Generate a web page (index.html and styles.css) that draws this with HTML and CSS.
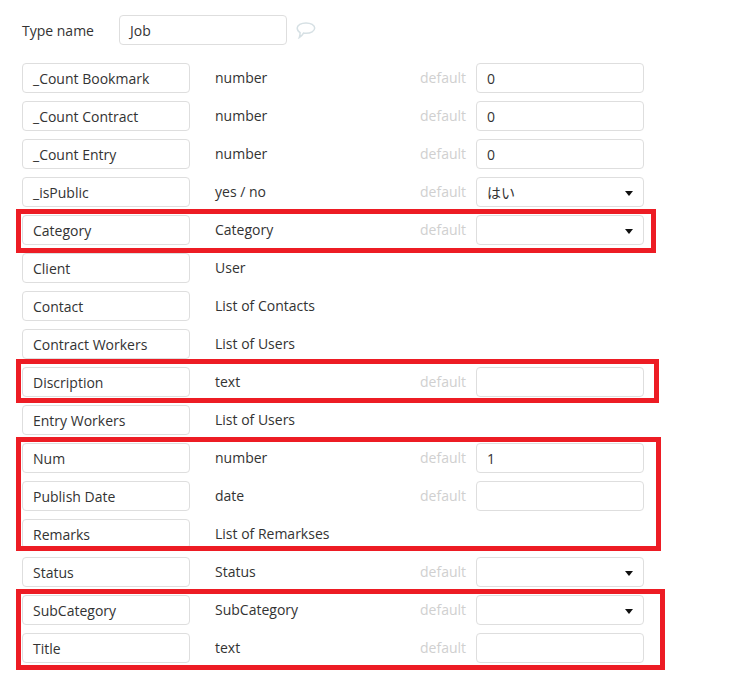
FILE: index.html
```html
<!DOCTYPE html>
<html lang="en">
<head>
    <meta charset="UTF-8">
    <meta name="viewport" content="width=device-width, initial-scale=1.0">
    <title>Type editor</title>
    <link rel="stylesheet" href="styles.css">
</head>
<body>
    <div class="editor">
        <!-- type name -->
        <div class="type-row">
            <span class="type-label">Type name</span>
            <div class="box type-input">Job</div>
            <svg class="comment-icon" width="20" height="17" viewBox="0 0 20 17">
                <path d="M10 .9c4.800 0 8.700 2.300 8.700 5.200S14.800 11.300 10 11.300c-.9 0-1.700-.1-2.500-.2-.9 1.700-2.100 3.300-4.200 4.400 .6-1.300.8-2.800.8-4.900C2.300 9.600 1.200 8 1.200 6.100 1.200 3.200 5.200.9 10 .9z" fill="none" stroke="#d6e0e4" stroke-width="1.500"/>
            </svg>
        </div>

        <!-- fields -->
        <div class="fields">
            <div class="field">
                <div class="box name">_Count Bookmark</div>
                <span class="kind">number</span>
                <span class="default-label">default</span>
                <div class="box value">0</div>
            </div>
            <div class="field">
                <div class="box name">_Count Contract</div>
                <span class="kind">number</span>
                <span class="default-label">default</span>
                <div class="box value">0</div>
            </div>
            <div class="field">
                <div class="box name">_Count Entry</div>
                <span class="kind">number</span>
                <span class="default-label">default</span>
                <div class="box value">0</div>
            </div>
            <div class="field">
                <div class="box name">_isPublic</div>
                <span class="kind">yes / no</span>
                <span class="default-label">default</span>
                <div class="box value select">はい</div>
            </div>
            <div class="field">
                <div class="box name">Category</div>
                <span class="kind">Category</span>
                <span class="default-label">default</span>
                <div class="box value select"></div>
            </div>
            <div class="field">
                <div class="box name">Client</div>
                <span class="kind">User</span>
            </div>
            <div class="field">
                <div class="box name">Contact</div>
                <span class="kind">List of Contacts</span>
            </div>
            <div class="field">
                <div class="box name">Contract Workers</div>
                <span class="kind">List of Users</span>
            </div>
            <div class="field">
                <div class="box name">Discription</div>
                <span class="kind">text</span>
                <span class="default-label">default</span>
                <div class="box value"></div>
            </div>
            <div class="field">
                <div class="box name">Entry Workers</div>
                <span class="kind">List of Users</span>
            </div>
            <div class="field">
                <div class="box name">Num</div>
                <span class="kind">number</span>
                <span class="default-label">default</span>
                <div class="box value">1</div>
            </div>
            <div class="field">
                <div class="box name">Publish Date</div>
                <span class="kind">date</span>
                <span class="default-label">default</span>
                <div class="box value"></div>
            </div>
            <div class="field">
                <div class="box name">Remarks</div>
                <span class="kind">List of Remarkses</span>
            </div>
            <div class="field">
                <div class="box name">Status</div>
                <span class="kind">Status</span>
                <span class="default-label">default</span>
                <div class="box value select"></div>
            </div>
            <div class="field">
                <div class="box name">SubCategory</div>
                <span class="kind">SubCategory</span>
                <span class="default-label">default</span>
                <div class="box value select"></div>
            </div>
            <div class="field">
                <div class="box name">Title</div>
                <span class="kind">text</span>
                <span class="default-label">default</span>
                <div class="box value"></div>
            </div>
        </div>

        <!-- red marks drawn over the screenshot -->
        <div class="mark mark-category"></div>
        <div class="mark mark-discription"></div>
        <div class="mark mark-num"></div>
        <div class="mark mark-sub"></div>
    </div>
</body>
</html>
```

FILE: styles.css
```css
/* base */
body {
    margin: 0;
    background-color: white;
    color: #333;
    font-family: "Open Sans", Arial, "Noto Sans CJK JP", sans-serif;
    font-size: 14px;
}

.editor {
    position: relative;
    height: 673px;
    padding: 15px 0 0 22px;
    box-sizing: border-box;
    overflow: hidden;
}

.box {
    width: 168px;
    height: 30px;
    padding: 0 10px;
    box-sizing: border-box;
    display: flex;
    align-items: center;
    background-color: white;
    border: 1px solid #dedede;
    border-radius: 4px;
}

/* type name */
.type-row {
    display: flex;
    align-items: center;
    height: 30px;
    margin-bottom: 18px;
}

.type-label {
    width: 97px;
}

.comment-icon {
    margin: 0 0 0 9px;
}

/* fields */
.fields {
    display: flex;
    flex-direction: column;
    gap: 8px;
}

.field {
    display: flex;
    align-items: center;
    height: 30px;
}

.kind {
    width: 205px;
    margin-left: 25px;
    margin-top: -2px;
}

.default-label {
    width: 56px;
    margin-top: -2px;
    color: #d0d0d0;
}

.select {
    position: relative;
}

.select::after {
    content: "";
    position: absolute;
    top: 13px;
    right: 10px;
    border-top: 5px solid #111;
    border-left: 4px solid transparent;
    border-right: 4px solid transparent;
}

/* red marks */
.mark {
    position: absolute;
    left: 16px;
    box-sizing: border-box;
    border: 5px solid #ed1c24;
}

.mark-category {
    top: 209px;
    width: 640px;
    height: 44px;
}

.mark-discription {
    top: 359px;
    width: 643px;
    height: 44px;
}

.mark-num {
    top: 437px;
    width: 645px;
    height: 114px;
}

.mark-sub {
    top: 589px;
    width: 649px;
    height: 81px;
}
```
